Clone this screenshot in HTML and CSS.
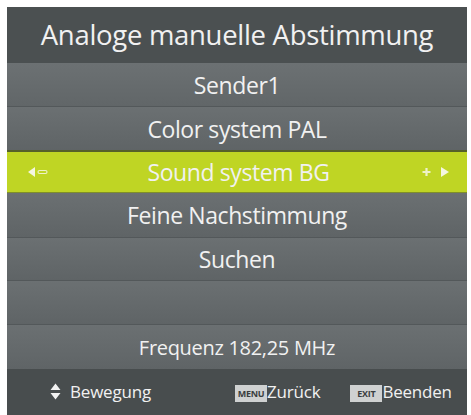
FILE: index.html
```html
<!DOCTYPE html>
<html lang="de">
<head>
<meta charset="utf-8">
<title>Analoge manuelle Abstimmung</title>
<link rel="stylesheet" href="styles.css">
</head>
<body>
<div class="panel">
  <div class="header">Analoge manuelle Abstimmung</div>
  <div class="row r1">Sender1</div>
  <div class="row r2">Color system PAL</div>
  <div class="row sel">
    <span class="side left">
      <svg width="22" height="12" viewBox="0 0 22 12"><path d="M1 6 L8 1 L8 11 Z" fill="#f4f6e0"/><rect x="11" y="4.5" width="9" height="3" rx="1.5" fill="none" stroke="#eef2c8" stroke-width="1.2"/></svg>
    </span>
    <span class="label">Sound system BG</span>
    <span class="side right">
      <svg width="28" height="12" viewBox="0 0 28 12"><path d="M4.5 2 V10 M0.5 6 H8.5" stroke="#eef2c8" stroke-width="2.2" fill="none"/><path d="M19 1 L27 6 L19 11 Z" fill="#f4f6e0"/></svg>
    </span>
  </div>
  <div class="row r4">Feine Nachstimmung</div>
  <div class="row r5">Suchen</div>
  <div class="row r6"></div>
  <div class="row freq">Frequenz 182,25 MHz</div>
  <div class="footer">
    <div class="hint move">
      <svg width="11" height="17" viewBox="0 0 11 17"><path d="M5.5 0.5 L10.5 7 H0.5 Z M5.5 16.5 L10.5 10 H0.5 Z" fill="#f2f2f2"/></svg>
      <span>Bewegung</span>
    </div>
    <div class="hint back"><span class="key">MENU</span><span>Zurück</span></div>
    <div class="hint exit"><span class="key">EXIT</span><span>Beenden</span></div>
  </div>
</div>
</body>
</html>
```
FILE: styles.css
```css
html, body {
  margin: 0;
  padding: 0;
  background: #ffffff;
}
body {
  font-family: "Open Sans", "Noto Sans", sans-serif;
  color: #f1f1f1;
}
.panel {
  margin: 7px 0 0 7px;
  width: 460px;
  height: 408px;
  display: flex;
  flex-direction: column;
  background: #5f6466;
}
.header {
  height: 56px;
  background: #4b5051;
  display: flex;
  align-items: center;
  justify-content: center;
  font-size: 27.5px;
  letter-spacing: -0.3px;
  padding-bottom: 2px;
  box-sizing: border-box;
}
.row {
  height: 44px;
  box-sizing: border-box;
  display: flex;
  align-items: center;
  justify-content: center;
  font-size: 23px;
  letter-spacing: -0.4px;
  border-top: 1px solid #53585a;
  background: linear-gradient(#6b7072, #5f6466);
}
.r1 { border-top: none; height: 43px; background: linear-gradient(#6c7173, #616668); }
.r2 { height: 44px; }
.sel {
  height: 43px;
  background: #bfd524;
  border-top: 2px solid #55602a;
  border-bottom: 1px solid #808f2a;
  justify-content: space-between;
  padding: 0 17px 0 20px;
}
.sel .label { flex: 1; text-align: center; }
.side { display: flex; align-items: center; width: 32px; }
.side.right { justify-content: flex-end; }
.r4 { height: 44px; border-top: none; }
.r5 { height: 43px; }
.r6 { height: 44px; }
.freq { height: 45px; font-size: 20px; letter-spacing: -0.3px; }
.footer {
  height: 46px;
  background: #484d4e;
  display: flex;
  align-items: center;
  font-size: 17px;
  letter-spacing: -0.2px;
  padding-bottom: 2px;
  box-sizing: border-box;
}
.hint { display: flex; align-items: center; }
.move { margin-left: 43px; gap: 9px; }
.back { margin-left: 84px; }
.exit { margin-left: 30px; }
.key {
  display: inline-block;
  background: #cfd1d1;
  color: #3a3e40;
  font-size: 9px;
  font-weight: bold;
  line-height: 17px;
  width: 32px;
  text-align: center;
  margin-top: 4px;
  letter-spacing: -0.3px;
}
```
